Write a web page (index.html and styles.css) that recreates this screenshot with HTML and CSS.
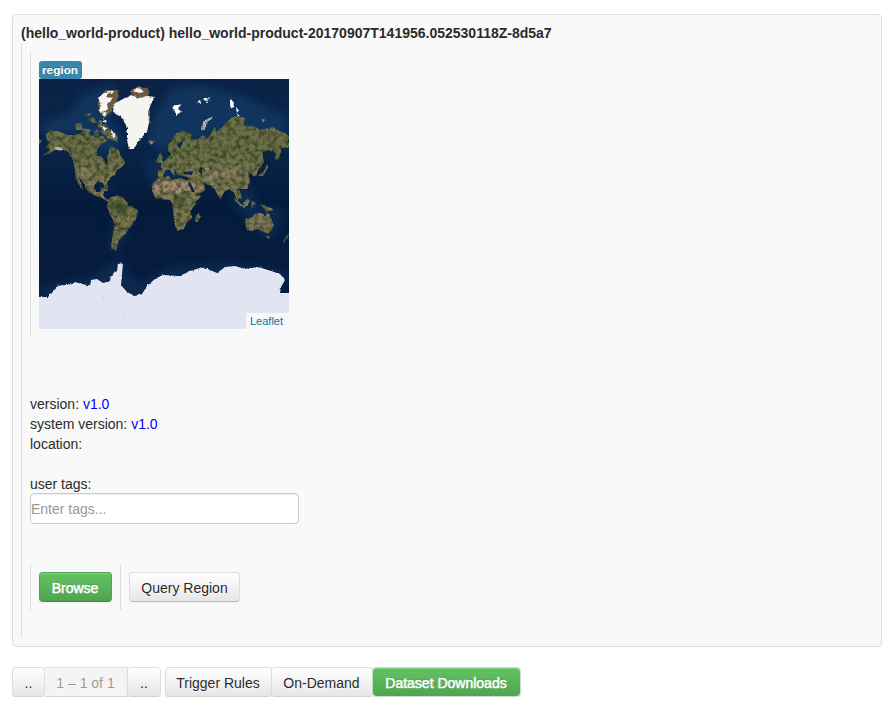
FILE: index.html
```html
<!DOCTYPE html>
<html lang="en">
<head>
<meta charset="utf-8">
<title>Dataset</title>
<link rel="stylesheet" href="styles.css">
</head>
<body>
<main class="card">
  <div class="title"><span class="t-title">(hello_world-product) hello_world-product-20170907T141956.052530118Z-8d5a7</span></div>
  <section class="details">
    <div class="region">
      <span class="label">region</span>
      <div class="map">
        <svg viewBox="39 79 250 250" width="250" height="250" aria-label="World map">
          <defs>
            <linearGradient id="sea" x1="0" y1="0" x2="0" y2="1">
              <stop offset="0" stop-color="#0b2246"/><stop offset=".25" stop-color="#09254a"/><stop offset=".5" stop-color="#051b3c"/><stop offset="1" stop-color="#081c3f"/>
            </linearGradient>
            <linearGradient id="landfill" gradientUnits="userSpaceOnUse" x1="0" y1="118" x2="0" y2="250">
              <stop offset="0" stop-color="#74724f"/><stop offset=".25" stop-color="#697048"/><stop offset=".5" stop-color="#817a57"/><stop offset="1" stop-color="#767450"/>
            </linearGradient>
            <filter id="soft" x="-50%" y="-50%" width="200%" height="200%"><feGaussianBlur stdDeviation="4"/></filter>
            <filter id="blend" x="-30%" y="-30%" width="160%" height="160%"><feGaussianBlur stdDeviation="1.5"/></filter>
            <filter id="terrain" filterUnits="userSpaceOnUse" x="39" y="79" width="250" height="250" color-interpolation-filters="sRGB">
              <feTurbulence type="fractalNoise" baseFrequency=".22" numOctaves="4" seed="8" result="n"/>
              <feDisplacementMap in="SourceGraphic" in2="n" scale="3" xChannelSelector="R" yChannelSelector="G" result="d"/>
              <feColorMatrix in="n" values="0 0 0 0 .15  0 0 0 0 .2  0 0 0 0 .07  1.8 0 0 0 -.68" result="k"/>
              <feComposite in="k" in2="d" operator="in" result="s"/>
              <feMerge><feMergeNode in="d"/><feMergeNode in="s"/></feMerge>
            </filter>
            <filter id="coast" filterUnits="userSpaceOnUse" x="35" y="75" width="260" height="260" color-interpolation-filters="sRGB">
              <feTurbulence type="fractalNoise" baseFrequency=".3" numOctaves="2" seed="3" result="n"/>
              <feDisplacementMap in="SourceGraphic" in2="n" scale="3" xChannelSelector="R" yChannelSelector="G"/>
            </filter>
          </defs>
          <rect x="39" y="79" width="250" height="250" fill="url(#sea)"/>
          <g filter="url(#soft)" fill="#123f6c" opacity=".6">
            <path d="M80 95L115 84 110 118 124 145 105 157 82 130 46 137 40 125 72 112zM153 120L170 88 200 85 240 95 287 116 285 134 225 130 165 150 148 144z"/>
            <path d="M232 188L252 185 258 204 285 210 279 232 266 240 235 208zM39 287L90 276 120 258 137 284 170 266 230 262 286 271 286 285 39 302z" opacity=".6"/>
            <path d="M112 220L136 213 118 253 108 250zM143 160L172 155 190 180 150 188zM100 185L115 182 111 195z" opacity=".6"/>
          </g>
          <g filter="url(#terrain)">
            <g fill="url(#landfill)">
              <path d="M46 134L50 131 58 131 68 135 76 135 82 132 90 135 98 138 102 135 107 140 100 145 97 150 98 155 103 158 106 164 108 162 107 157 109 153 109 147 114 148 119 150 120 155 125 162 122 167 117 170 114 175 110 178 107 183 108 189 105 188 103 183 98 182 94 185 96 192 100 192 103 188 105 190 102 195 107 199 111 200 109 202 100 197 94 195 88 191 84 184 79 177 81 185 84 189 82 189 77 181 75 170 73 160 68 152 63 149 57 149 50 153 42 156 50 150 46 147 50 142 46 140z"/>
              <path d="M109 199L115 195 122 197 127 202 129 206 138 210 137 216 134 223 128 230 122 237 118 242 116 250 111 248 112 239 115 224 110 215 107 206z"/>
              <path d="M160 177L169 176 172 180 180 178 188 181 191 188 196 196 200 195 199 198 195 205 190 211 192 218 187 222 184 228 178 231 175 226 173 213 173 205 170 200 160 199 155 197 152 192 152 187 154 182z"/>
              <path d="M158 177L158 170 162 170 160 164 166 160 171 154 168 151 168 145 173 139 177 132 184 131 192 135 190 138 197 140 203 135 207 139 212 132 215 127 217 132 227 123 231 118 237 116 245 118 243 125 255 127 260 130 273 127 280 131 289 135 289 147 281 148 279 158 275 160 276 153 268 150 262 153 264 162 258 170 256 177 253 175 248 172 250 182 246 189 239 189 242 198 237 200 234 193 229 189 225 191 220 199 215 190 210 185 204 184 205 190 195 196 189 184 188 177 178 175 176 171 173 168 175 177 170 170 166 170 162 177z"/>
              <path d="M196 216L199 213 200 218 197 223 195 221zM245 220L252 217 256 213 262 213 264 218 267 212 272 220 273 227 269 234 264 232 258 229 248 231 246 227zM284 239L289 233 287 238 283 243zM232 196L246 208 240 206zM243 202L249 198 248 205 244 207zM251 202L256 203 252 208zM260 204L275 210 267 211zM266 236L270 236 268 239zM258 176L264 171 267 164 268 168 263 176zM156 161L160 153 163 162 158 163zM149 140L154 141 151 145 148 143zM99 187L109 190 105 191z"/>
              <path d="M75 124L81 123 83 130 76 130zM83 128L91 130 88 134 82 133zM88 119L94 118 97 123 92 122zM95 129L100 130 98 137 94 135zM99 120L103 121 101 128 98 127zM103 124L109 128 118 136 117 142 108 138 101 132zM84 115L91 113 90 116zM39 139L42 141 39 144z"/>
            </g>
            <path fill="#a18a72" d="M154 184L174 180 188 182 191 190 178 193 158 193 153 191zM190 182L204 188 196 194z"/>
            <g filter="url(#blend)">
              <path fill="#948468" d="M206 181L205 172 218 169 233 166 242 171 237 177 218 179zM252 218L266 219 269 226 256 227 249 226z" opacity=".8"/>
              <path fill="#8d8161" d="M76 160L84 164 87 181 91 187 80 174z"/>
              <path fill="#344f2a" d="M111 202L121 200 129 207 126 214 117 215 112 210zM175 196L184 196 186 206 177 206zM238 183L244 181 242 186z" opacity=".7"/>
            </g>
          </g>
          <path d="M188 183L190 182 195 192 192 192zM200 167L202 168 202 176 199 171zM184 172L193 171 192 175 184 174zM177 145L184 139 180 149z" fill="#09244b"/>
          <g filter="url(#coast)">
            <path fill="#6c5b40" d="M98 98L106 90 118 90 119 96 111 112 104 118 98 110zM130 91L138 86 148 89 150 98 144 104 134 98z"/>
            <path fill="#716a53" d="M148 103L150 112 150 122 147 128 146 110z"/>
            <path fill="#f4f4f1" d="M115 103L123 99 131 95 139 98 147 96 155 97 151 104 148 111 149 122 147 132 139 140 134 149 129 149 127 140 127 128 123 118 116 114 113 108zM98 98L104 93 110 92 106 97 113 98 107 104 108 109 103 113 99 111 101 105zM103 119L107 121 105 123zM101 126L108 128 104 130zM111 129L116 137 113 138zM133 90L139 88 144 92 139 93zM108 91L114 91 112 94zM102 114L107 112 105 117z"/>
            <path fill="#fff" d="M172 107L177 105 182 104 178 108 181 112 176 115zM196 102L200 100 201 103zM203 99L206 97 207 101zM208 98L210 97 209 101zM205 103L208 102 208 103zM231 99L234 103 233 108 230 106zM236 108L239 110 237 113zM237 114L240 115 237 117z"/>
            <path fill="#aeb0a4" d="M203 122L212 116 213 118 207 122 204 131 202 130zM261 119L266 120 263 122zM205 168L209 168 207 170z"/>
            <path fill="#b8b8aa" d="M53 149L58 147 65 150 63 151zM150 142L153 142 151 144z"/>
            <path fill="#e1e4f1" d="M34 297L48 297 52 293 58 286 73 284 75 282 90 286 91 280 97 279 103 283 110 281 111 275 117 271 118 264 123 263 121 285 127 292 135 296 142 294 147 286 155 279 163 275 180 276 190 271 203 267 217 273 225 267 235 266 245 269 258 267 268 270 280 274 285 280 281 287 280 293 295 293 295 335 34 335z"/>
            <path d="M102 296l2 5M123 320l2-4M132 314l3-3M141 306l2-3M275 302l2 4M280 294l2 2" stroke="#ced4e1" fill="none"/>
          </g>
        </svg>
        <a class="attribution"><span class="t-leaflet">Leaflet</span></a>
      </div>
    </div>
    <div class="meta">
      <div><span class="t-ver">version: <b>v1.0</b></span></div>
      <div><span class="t-sys">system version: <b>v1.0</b></span></div>
      <div><span class="t-loc">location:</span></div>
    </div>
    <label class="tags"><span class="t-tags">user tags:</span><input type="text" placeholder="Enter tags..."></label>
    <div class="actions">
      <div class="action"><button class="btn green browse"><span class="t-browse">Browse</span></button></div>
      <div class="action"><button class="btn query"><span class="t-query">Query Region</span></button></div>
    </div>
  </section>
</main>
<footer class="toolbar">
  <div class="group pager"><button class="btn dots">..</button><button class="btn count" disabled><span class="t-count">1 – 1 of 1</span></button><button class="btn dots next">..</button></div>
  <div class="group"><button class="btn trigger"><span class="t-trigger">Trigger Rules</span></button><button class="btn demand"><span class="t-demand">On-Demand</span></button><button class="btn green downloads"><span class="t-down">Dataset Downloads</span></button></div>
</footer>
</body>
</html>
```

FILE: styles.css
```css
* { box-sizing: border-box; }
body { margin: 0; padding: 14px 13px 0 12px; background: #fff; color: #2b2b2b; font: 14px/20px "Liberation Sans", Arial, sans-serif; }
.card { height: 633px; padding: 8px; background: #f9f9f9; border: 1px solid #ddd; border-radius: 4px; }
.title { height: 20px; font-weight: bold; white-space: nowrap; }
.details { height: 595px; padding: 8px; border-left: 1px solid #ddd; }
.region { width: 260px; height: 286px; padding: 10px 8px 0; border-left: 1px solid #ddd; }
.label { display: block; width: 43px; height: 18px; padding-left: 3px; background: #3a87ad; border-radius: 3px; color: #fff; font-size: 11.8px; font-weight: bold; line-height: 19px; text-shadow: 0 -1px 0 rgba(0,0,0,.25); }
.map { position: relative; width: 250px; height: 250px; overflow: hidden; }
.map svg { display: block; }
.attribution { position: absolute; right: 0; bottom: 0; width: 43px; height: 16px; padding-left: 4px; background: rgba(255,255,255,.7); color: #0078a8; font-size: 11px; line-height: 16px; }
.meta { margin-top: 57px; height: 80px; }
.meta b { color: #00f; font-weight: normal; }
.tags { display: block; width: 269px; }
.tags span { display: block; height: 19px; width: max-content; }
.tags input { display: block; width: 269px; height: 31px; padding: 0; background: #fff; border: 1px solid #ccc; border-radius: 4px; box-shadow: inset 0 1px 1px rgba(0,0,0,.075); font: inherit; }
.tags input::placeholder { color: #999; opacity: 1; }
.actions { display: flex; margin-top: 40px; }
.action { height: 46px; padding: 8px; border-left: 1px solid #ddd; }
.btn { height: 30px; margin: 0; padding: 1px 0 0; border: 1px solid #ddd; border-bottom-color: #b9b9b9; border-radius: 4px; background: linear-gradient(#fff, #e6e6e6); box-shadow: inset 0 1px 0 rgba(255,255,255,.2), 0 1px 2px rgba(0,0,0,.05); color: #2b2b2b; font: inherit; white-space: nowrap; text-shadow: 0 1px 1px rgba(255,255,255,.75); }
.green { border-color: #51a351 #51a351 #438643; background: linear-gradient(#62c462, #51a351); color: #fff; text-shadow: 0 -1px 0 rgba(0,0,0,.25); -webkit-text-stroke: .5px #fff; }
.browse { width: 73px; padding-right: 1px; }
.query { width: 111px; }
.toolbar { display: flex; margin-top: 20px; gap: 4px; }
.group { display: flex; }
.group .btn { border-bottom-color: #d3d3d3; }
.dots { width: 33px; }
.next { width: 34px; }
.count { width: 83px; padding-right: 1px; margin-right: -1px; border-left-width: 0; border-radius: 0; background: #f4f4f4; color: #999; box-shadow: none; }
.trigger { width: 107px; padding-right: 1px; }
.demand { width: 102px; margin-left: -1px; padding-right: 1px; }
.downloads { width: 149px; margin-left: -1px; padding-right: 1px; }
.group .downloads { border-color: #c8ddc8; background-clip: padding-box; }
```
